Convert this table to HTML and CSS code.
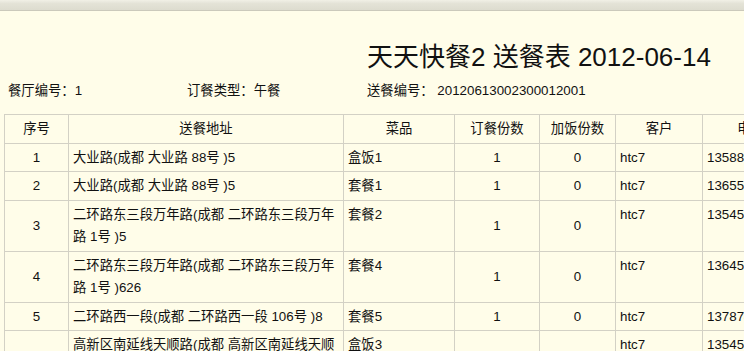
FILE: index.html
```html
<!DOCTYPE html>
<html lang="zh-CN">
<head>
<meta charset="utf-8">
<title>天天快餐2 送餐表</title>
<link rel="stylesheet" href="styles.css">
</head>
<body>
<div class="topbar"></div>
<h1 class="title">天天快餐2 送餐表 2012-06-14</h1>
<div class="info">
  <div>餐厅编号：1</div>
  <div>订餐类型：午餐</div>
  <div>送餐编号： 20120613002300012001</div>
</div>
<table class="orders">
  <colgroup>
    <col class="c-no"><col class="c-addr"><col class="c-dish"><col class="c-qty"><col class="c-extra"><col class="c-cust"><col class="c-tel">
  </colgroup>
  <thead>
    <tr><th>序号</th><th>送餐地址</th><th>菜品</th><th>订餐份数</th><th>加饭份数</th><th>客户</th><th>电话</th></tr>
  </thead>
  <tbody>
    <tr><td class="mid">1</td><td>大业路(成都 大业路 88号 )5</td><td>盒饭1</td><td class="mid">1</td><td class="mid">0</td><td>htc7</td><td>13588206531</td></tr>
    <tr><td class="mid">2</td><td>大业路(成都 大业路 88号 )5</td><td>套餐1</td><td class="mid">1</td><td class="mid">0</td><td>htc7</td><td>13655410728</td></tr>
    <tr><td class="mid">3</td><td>二环路东三段万年路(成都 二环路东三段万年路 1号 )5</td><td>套餐2</td><td class="mid">1</td><td class="mid">0</td><td>htc7</td><td>13545120963</td></tr>
    <tr><td class="mid">4</td><td>二环路东三段万年路(成都 二环路东三段万年路 1号 )626</td><td>套餐4</td><td class="mid">1</td><td class="mid">0</td><td>htc7</td><td>13645201873</td></tr>
    <tr><td class="mid">5</td><td>二环路西一段(成都 二环路西一段 106号 )8</td><td>套餐5</td><td class="mid">1</td><td class="mid">0</td><td>htc7</td><td>13787430156</td></tr>
    <tr><td class="mid">6</td><td>高新区南延线天顺路(成都 高新区南延线天顺路 8号 )3</td><td>盒饭3</td><td class="mid">1</td><td class="mid">0</td><td>htc7</td><td>13545318820</td></tr>
  </tbody>
</table>
</body>
</html>
```
FILE: styles.css
```css
html, body {
  margin: 0;
  padding: 0;
  overflow: hidden;
}
body {
  background: #fffde9;
  color: #111;
  font-family: "Liberation Sans", "Noto Sans CJK SC", sans-serif;
  font-size: 13.33px;
  width: 744px;
}
.topbar {
  height: 10px;
  background: linear-gradient(#f1f0e6 0%, #e4e3d7 35%, #dddccf 100%);
  border-bottom: 1px solid #cbc9bb;
}
.title {
  margin: 31px 0 0 367px;
  font-size: 26px;
  font-weight: normal;
  line-height: 30px;
  white-space: nowrap;
  color: #111;
}
.info {
  display: grid;
  grid-template-columns: 179px 180px auto;
  padding-left: 8px;
  margin-top: 11px;
  line-height: 16px;
  white-space: nowrap;
}
.orders {
  margin: 15px 0 0 4px;
  border-collapse: collapse;
  table-layout: fixed;
  width: 794px;
}
.c-no { width: 64px; }
.c-addr { width: 275px; }
.c-dish { width: 111px; }
.c-qty { width: 85px; }
.c-extra { width: 76px; }
.c-cust { width: 87px; }
.c-tel { width: 96px; }
.orders th,
.orders td {
  border: 1px solid #d3d1c5;
  padding: 3px 4px 2px;
  line-height: 22.5px;
  font-weight: normal;
  text-align: left;
  vertical-align: top;
}
.orders th {
  text-align: center;
  vertical-align: middle;
}
.orders td.mid {
  text-align: center;
  vertical-align: middle;
}
```
